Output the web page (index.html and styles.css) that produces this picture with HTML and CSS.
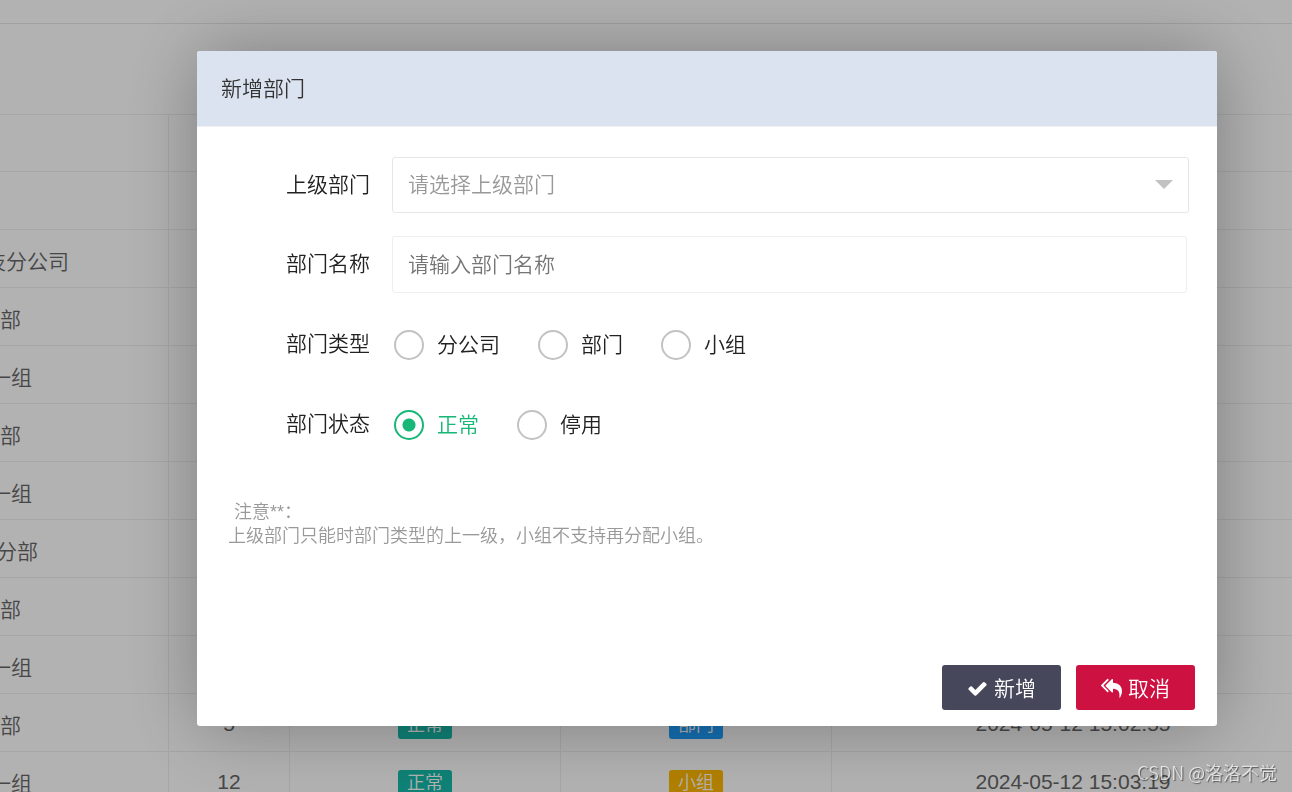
FILE: index.html
```html
<!DOCTYPE html>
<html lang="zh-CN">
<head>
<meta charset="utf-8">
<title>新增部门</title>
<link rel="stylesheet" href="styles.css">
</head>
<body>
<main class="page">
  <div class="page-top"></div>
  <div class="toolbar"></div>
  <table class="grid">
    <colgroup><col class="col-name"><col class="col-id"><col class="col-tag"><col class="col-tag"><col></colgroup>
    <tbody>
      <tr class="head"><td></td><td></td><td></td><td></td><td></td></tr>
      <tr><td></td><td></td><td></td><td></td><td></td></tr>
      <tr><td class="name branch">技分公司</td><td></td><td></td><td></td><td></td></tr>
      <tr><td class="name">部</td><td></td><td></td><td></td><td></td></tr>
      <tr><td class="name team">一组</td><td></td><td></td><td></td><td></td></tr>
      <tr><td class="name">部</td><td></td><td></td><td></td><td></td></tr>
      <tr><td class="name team">一组</td><td></td><td></td><td></td><td></td></tr>
      <tr><td class="name division">分部</td><td></td><td></td><td></td><td></td></tr>
      <tr><td class="name">部</td><td></td><td></td><td></td><td></td></tr>
      <tr><td class="name team">一组</td><td></td><td></td><td></td><td></td></tr>
      <tr><td class="name">部</td><td>5</td><td><span class="badge green">正常</span></td><td><span class="badge blue">部门</span></td><td class="time">2024-05-12 15:02:55</td></tr>
      <tr><td class="name team">一组</td><td>12</td><td><span class="badge green">正常</span></td><td><span class="badge orange">小组</span></td><td class="time">2024-05-12 15:03:19</td></tr>
    </tbody>
  </table>
</main>

<div class="shade">
  <form class="dialog" role="dialog" aria-labelledby="dialog-title">
    <h1 class="dialog-title" id="dialog-title">新增部门</h1>
    <div class="dialog-body">
      <div class="field">
        <label class="field-label" for="parent">上级部门</label>
        <div class="select-box">
          <select class="control" id="parent"><option>请选择上级部门</option></select>
        </div>
      </div>
      <div class="field">
        <label class="field-label" for="name">部门名称</label>
        <input class="control control-input" id="name" type="text" placeholder="请输入部门名称">
      </div>
      <div class="field" role="radiogroup" aria-labelledby="type-label">
        <span class="field-label" id="type-label">部门类型</span>
        <div class="radios">
          <label class="radio"><input type="radio" name="type"><span>分公司</span></label>
          <label class="radio"><input type="radio" name="type"><span>部门</span></label>
          <label class="radio"><input type="radio" name="type"><span>小组</span></label>
        </div>
      </div>
      <div class="field" role="radiogroup" aria-labelledby="state-label">
        <span class="field-label" id="state-label">部门状态</span>
        <div class="radios">
          <label class="radio"><input type="radio" name="state" checked><span>正常</span></label>
          <label class="radio"><input type="radio" name="state"><span>停用</span></label>
        </div>
      </div>
      <div class="note">
        <p class="note-title">注意**：</p>
        <p>上级部门只能时部门类型的上一级，小组不支持再分配小组。</p>
      </div>
    </div>
    <div class="actions">
      <button class="btn btn-dark" type="button">
        <svg class="icon" viewBox="0 0 1792 1792" aria-hidden="true"><path fill="currentColor" d="M1671 566q0 40-28 68l-724 724-136 136q-28 28-68 28t-68-28l-136-136-362-362q-28-28-28-68t28-68l136-136q28-28 68-28t68 28l294 295 656-657q28-28 68-28t68 28l136 136q28 28 28 68z"/></svg>
        <span>新增</span>
      </button>
      <button class="btn btn-red" type="button">
        <svg class="icon" viewBox="0 0 1792 1792" aria-hidden="true"><path fill="currentColor" d="M640 1082v70q0 42-39 59-13 5-25 5-27 0-45-19l-512-512q-19-19-19-45t19-45l512-512q29-31 70-14 39 17 39 59v69l-397 398q-19 19-19 45t19 45zm1152 58q0 58-17 133.500t-38.500 138-48 125-40.500 90.500l-20 40q-8 17-28 17-6 0-9-1-25-8-23-34 43-400-106-565-64-71-170.500-110.500t-267.500-52.500v251q0 42-39 59-13 5-25 5-27 0-45-19l-512-512q-19-19-19-45t19-45l512-512q29-31 70-14 39 17 39 59v262q411 28 599 221 169 173 169 509z"/></svg>
        <span>取消</span>
      </button>
    </div>
  </form>
</div>
<div class="watermark">CSDN @洛洛不觉</div>
</body>
</html>
```
FILE: styles.css
```css
* { box-sizing: border-box; }

body {
  margin: 0;
  height: 100vh;
  overflow: hidden;
  background: #fff;
  color: #666;
  font: 350 21px/32px "Liberation Sans", "Noto Sans CJK SC DemiLight", "Noto Sans CJK SC", sans-serif;
}

.page-top { height: 24px; border-bottom: 1px solid #e6e6e6; }
.toolbar { height: 91px; border-bottom: 1px solid #eee; }

.grid {
  width: 100%;
  table-layout: fixed;
  border-collapse: separate;
  border-spacing: 0;
}
.col-name { width: 169px; }
.col-id { width: 121px; }
.col-tag { width: 271px; }
.grid td {
  height: 58px;
  padding: 2px 0 0;
  border: solid #eee;
  border-width: 0 1px 1px 0;
  text-align: center;
  white-space: nowrap;
}
.grid .head td { height: 57px; }
.grid td:last-child { border-right: 0; }
.grid .name { text-align: left; padding-top: 6px; }
.grid .branch { text-indent: -15px; }
.grid .team { text-indent: -10px; }
.grid .division { text-indent: -4px; }
.grid .time { padding-left: 22px; }

.badge {
  display: inline-block;
  margin-top: 2px;
  padding: 0 9px;
  border-radius: 3px;
  color: #fff;
  font-size: 18px;
  line-height: 27px;
  vertical-align: middle;
}
.green { background: #16baaa; }
.blue { background: #1e9fff; }
.orange { background: #ffb800; }

.shade {
  position: fixed;
  inset: 0;
  padding: 51px 75px 66px 197px;
  background: rgba(0, 0, 0, .3);
}

.dialog {
  display: flex;
  flex-direction: column;
  height: 100%;
  border-radius: 3px;
  background: #fff;
  color: #222;
  box-shadow: 1px 1px 75px rgba(0, 0, 0, .3);
}
.dialog-title {
  margin: 0;
  padding: 0 24px;
  border-bottom: 1px solid #f0f0f0;
  border-radius: 3px 3px 0 0;
  background: #dce3f0;
  color: #333;
  font-size: 21px;
  font-weight: inherit;
  line-height: 75px;
}
.dialog-body {
  flex: 1;
  display: flex;
  flex-direction: column;
  gap: 23px;
  padding: 30px 28px 0 31px;
}

.field { display: flex; min-height: 56px; }
.field + .field { min-height: 57px; }
.field-label {
  flex: none;
  width: 164px;
  padding-right: 22px;
  line-height: 56px;
  text-align: right;
}
.select-box { position: relative; flex: 1; }
.select-box::after {
  content: "";
  position: absolute;
  top: 23px;
  right: 16px;
  border: 9px solid transparent;
  border-top-color: #c2c2c2;
  border-bottom: 0;
  pointer-events: none;
}
.control {
  width: 100%;
  height: 56px;
  padding: 0 15px;
  border: 1px solid #e6e6e6;
  border-radius: 3px;
  background: #fff;
  color: #999;
  font: inherit;
  appearance: none;
}
.control-input { flex: 1; height: 57px; margin-right: 2px; border-color: #eee; color: #222; }
.control::placeholder { color: #757575; }

.radios { display: flex; gap: 38px; padding-left: 2px; }
.radio { display: flex; align-items: center; gap: 13px; }
.radio input {
  width: 30px;
  height: 30px;
  margin: 0;
  border: 2px solid #c2c2c2;
  border-radius: 50%;
  appearance: none;
}
.radio input:checked {
  border-color: #16b777;
  background: radial-gradient(circle, #16b777 6px, transparent 7px);
}
.radio input:checked + span { color: #16b777; }

.note { padding-top: 24px; color: #999; font-size: 18px; line-height: 24px; }
.note p { margin: 0; }
.note .note-title { padding-left: 6px; }

.actions {
  display: flex;
  justify-content: flex-end;
  gap: 15px;
  padding: 0 22px 16px;
}
.btn {
  display: flex;
  align-items: center;
  justify-content: center;
  gap: 6px;
  width: 119px;
  height: 45px;
  padding: 2px 0 0;
  border: 0;
  border-radius: 3px;
  color: #fff;
  font: inherit;
}
.btn-dark { background: #47475c; }
.btn-red { background: #cd1141; }
.icon { width: 21px; height: 21px; }

.watermark {
  position: fixed;
  right: 15px;
  bottom: 7px;
  color: rgba(255, 255, 255, .7);
  font: 350 18px/26px "Noto Sans CJK SC DemiLight", "Noto Sans CJK SC", sans-serif;
  text-shadow: 1px 1px 1px rgba(0, 0, 0, .5);
}
```
